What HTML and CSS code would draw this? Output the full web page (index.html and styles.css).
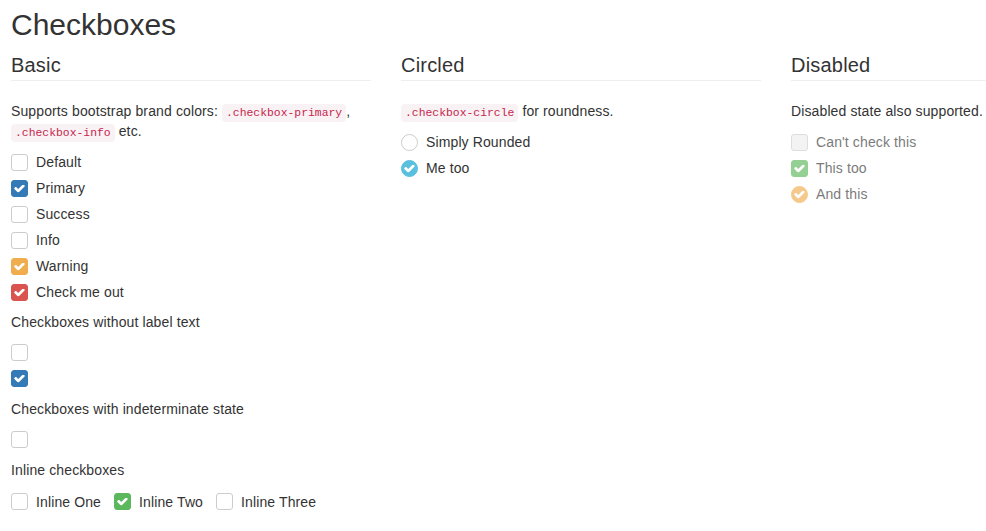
FILE: index.html
```html
<!DOCTYPE html>
<html lang="en">
<head>
  <meta charset="UTF-8">
  <title>Checkboxes</title>
  <link rel="stylesheet" href="styles.css">
</head>
<body>

  <!-- one check glyph, reused by every ticked box -->
  <svg class="defs" width="0" height="0">
    <symbol id="check" viewBox="100 420 1600 1100">
      <path d="M1671 566q0 40-28 68l-724 724-136 136q-28 28-68 28t-68-28l-136-136-362-362q-28-28-28-68t28-68l136-136q28-28 68-28t68 28l294 295 656-657q28-28 68-28t68 28l136 136q28 28 28 68z"/>
    </symbol>
  </svg>

  <div class="page">
    <h1>Checkboxes</h1>

    <div class="columns">

      <!-- Basic -->
      <section class="col">
        <h2>Basic</h2>
        <p class="intro">Supports bootstrap brand colors: <code>.checkbox-primary</code>, <code>.checkbox-info</code> etc.</p>

        <div class="checkbox"><span class="box"></span>Default</div>
        <div class="checkbox"><span class="box primary"><svg><use href="#check"/></svg></span>Primary</div>
        <div class="checkbox"><span class="box"></span>Success</div>
        <div class="checkbox"><span class="box"></span>Info</div>
        <div class="checkbox"><span class="box warning"><svg><use href="#check"/></svg></span>Warning</div>
        <div class="checkbox"><span class="box danger"><svg><use href="#check"/></svg></span>Check me out</div>

        <p>Checkboxes without label text</p>
        <div class="checkbox"><span class="box"></span></div>
        <div class="checkbox"><span class="box primary"><svg><use href="#check"/></svg></span></div>

        <p class="after-empty">Checkboxes with indeterminate state</p>
        <div class="checkbox"><span class="box"></span></div>

        <p class="after-empty">Inline checkboxes</p>
        <div class="inline-row">
          <div class="inline-item"><span class="box"></span>Inline One</div>
          <div class="inline-item"><span class="box success"><svg><use href="#check"/></svg></span>Inline Two</div>
          <div class="inline-item"><span class="box"></span>Inline Three</div>
        </div>
      </section>

      <!-- Circled -->
      <section class="col">
        <h2>Circled</h2>
        <p class="intro"><code>.checkbox-circle</code> for roundness.</p>

        <div class="checkbox"><span class="box circle"></span>Simply Rounded</div>
        <div class="checkbox"><span class="box circle info"><svg><use href="#check"/></svg></span>Me too</div>
      </section>

      <!-- Disabled -->
      <section class="col">
        <h2>Disabled</h2>
        <p class="intro">Disabled state also supported.</p>

        <div class="checkbox disabled"><span class="box"></span>Can't check this</div>
        <div class="checkbox disabled"><span class="box success"><svg><use href="#check"/></svg></span>This too</div>
        <div class="checkbox disabled"><span class="box circle warning"><svg><use href="#check"/></svg></span>And this</div>
      </section>

    </div>
  </div>

</body>
</html>
```

FILE: styles.css
```css
body {
  margin: 0;
  font-family: "Liberation Sans", Arial, sans-serif;
  font-size: 14px;
  line-height: 20px;
  letter-spacing: 0.12px;
  color: #333;
  background-color: #fff;
  overflow: hidden;
}

.defs {
  position: absolute;
}

.page {
  padding: 7px 0 0 11px;
}

h1 {
  margin: 0;
  font-size: 30px;
  line-height: 36px;
  font-weight: normal;
  letter-spacing: 0;
}

.columns {
  display: grid;
  grid-template-columns: 360px 360px 1fr;
  column-gap: 30px;
  margin-top: 11px;
}

h2 {
  margin: 0 0 20px;
  padding-bottom: 4px;
  font-size: 20px;
  line-height: 22px;
  font-weight: normal;
  letter-spacing: 0.2px;
  border-bottom: 1px solid #eee;
}

p {
  margin: 0 0 10px;
}

p.intro {
  margin-bottom: 11px;
}

p.after-empty {
  margin-top: 11px;
}

code {
  font-family: "Liberation Mono", Consolas, monospace;
  font-size: 11.4px;
  line-height: 1;
  letter-spacing: 0;
  padding: 3px 4px;
  color: #c7254e;
  background-color: #f9f2f4;
  border-radius: 4px;
}

/* Checkbox rows */
.checkbox {
  display: flex;
  align-items: flex-start;
  min-height: 20px;
  margin: 10px 0;
}

.checkbox + .checkbox {
  margin-top: -4px;
}

.box {
  flex: none;
  display: flex;
  align-items: center;
  justify-content: center;
  box-sizing: border-box;
  width: 17px;
  height: 17px;
  margin: 2px 8px 0 0;
  border: 1px solid #ccc;
  border-radius: 3px;
  background-color: #fff;
}

.box svg {
  width: 11px;
  height: 7.5px;
  margin-top: 1px;
  fill: #fff;
}

.box.circle {
  border-radius: 50%;
}

.box.primary {
  background-color: #337ab7;
  border-color: #337ab7;
}

.box.success {
  background-color: #5cb85c;
  border-color: #5cb85c;
}

.box.info {
  background-color: #5bc0de;
  border-color: #5bc0de;
}

.box.warning {
  background-color: #f0ad4e;
  border-color: #f0ad4e;
}

.box.danger {
  background-color: #d9534f;
  border-color: #d9534f;
}

/* Disabled */
.checkbox.disabled {
  opacity: 0.65;
}

.checkbox.disabled .box:not(.success):not(.warning) {
  background-color: #eee;
}

/* Inline */
.inline-row {
  display: flex;
  margin-top: 12px;
}

.inline-item {
  display: flex;
  align-items: flex-start;
  margin-right: 13px;
}

.inline-item .box {
  margin-top: 1px;
}
```
